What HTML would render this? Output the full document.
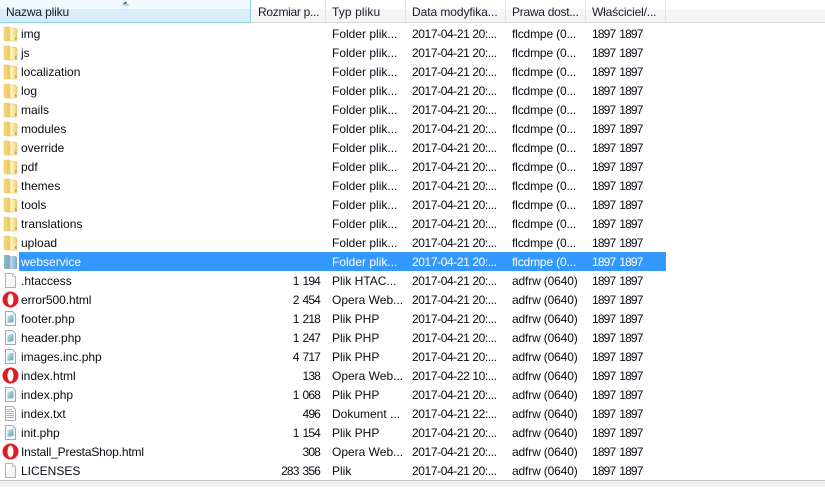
<!DOCTYPE html>
<html lang="pl"><head><meta charset="utf-8"><title>Pliki</title>
<style>
html,body{margin:0;padding:0;background:#fff}
body{width:825px;height:487px;overflow:hidden;position:relative;font:12px/19px "Liberation Sans",sans-serif;color:#0a0a14}
#hd{position:absolute;left:0;top:0;width:825px;height:22px;background:linear-gradient(#fff 0,#fff 9px,#f6f7f9 9px,#f3f4f6 21px);border-bottom:1px solid #d5d5d5;line-height:25px;color:#1a1c28}
#hs{position:absolute;left:0;top:0;width:250px;height:22px;background:linear-gradient(#f1f9fe 0,#f1f9fe 9px,#d9eef9 9px,#d6ecf8 21px);border-bottom:1px solid #8fd2f0}
.sep{position:absolute;top:0;width:1px;height:22px;background:#e3e5e8}
.h{position:absolute;top:0;white-space:nowrap}
.r{position:absolute;left:0;width:666px;height:19px;white-space:nowrap}
.r span{position:absolute;top:1px}
.n{left:21px}
.s{left:250px;width:70px;text-align:right;letter-spacing:-.85px;word-spacing:1.5px}
.t{left:332px}
.d{left:412px;letter-spacing:-.4px}
.p{left:512px;letter-spacing:-.15px}
.o{left:592px;letter-spacing:-.85px;word-spacing:1.5px}
.r svg{position:absolute;left:2px;top:1px}
#sel{position:absolute;left:19px;top:252px;width:645px;height:17px;background:#3399ff;border:1px dotted #c8822a}
.w{color:#fff}
#bot{position:absolute;left:0;top:480px;width:825px;height:6px;background:#f0f0f0;border-top:1px solid #c4c4c4}
</style></head><body>
<svg width="0" height="0" style="position:absolute">
<defs>
<linearGradient id="fy" x1="0" y1="0" x2="1" y2="0"><stop offset="0" stop-color="#f8dc80"/><stop offset=".4" stop-color="#ecc860"/><stop offset=".55" stop-color="#fef6cc"/><stop offset=".75" stop-color="#fae69a"/><stop offset="1" stop-color="#eccb6c"/></linearGradient>
<linearGradient id="fz" x1="0" y1="0" x2="1" y2="0"><stop offset="0" stop-color="#8fb6cc"/><stop offset=".4" stop-color="#7fa9c2"/><stop offset=".55" stop-color="#bcd8ea"/><stop offset=".75" stop-color="#9cc4dc"/><stop offset="1" stop-color="#7aa8c8"/></linearGradient>
<linearGradient id="fb" x1="0" y1="0" x2="1" y2="1"><stop offset="0" stop-color="#c9e6f0"/><stop offset="1" stop-color="#5da3bb"/></linearGradient>
<linearGradient id="fp" x1="0" y1="0" x2="1" y2="1"><stop offset="0" stop-color="#fff"/><stop offset="1" stop-color="#eceef0"/></linearGradient>
<symbol id="folder" viewBox="0 0 17 17"><path d="M2 2h5l1 1h5l2 1v11.500l-.5.500H3l-1-1z" fill="url(#fy)" stroke="#dcc070" stroke-width=".5"/><path d="M13 12.500h1.500v2H13z" fill="#6aa8c4"/></symbol>
<symbol id="folders" viewBox="0 0 17 17"><path d="M2 2h5l1 1h5l2 1v11.500l-.5.500H3l-1-1z" fill="url(#fz)"/></symbol>
<symbol id="file" viewBox="0 0 17 17"><path d="M3.500 1.500h7l3 3v11h-10z" fill="url(#fp)" stroke="#b0b4ba"/><path d="M10.500 1.500v3h3" fill="#f2f3f5" stroke="#c0c4ca"/></symbol>
<symbol id="php" viewBox="0 0 17 17"><path d="M3.500 1.500h7l3 3v11h-10z" fill="#f8f9fa" stroke="#a4a8ae"/><path d="M5.500 6l6-1.500V12l-6 1z" fill="url(#fb)"/></symbol>
<symbol id="txt" viewBox="0 0 17 17"><path d="M3.500 1.500h7l3 3v11h-10z" fill="#fff" stroke="#a9adb3"/><path d="M5 4.500h5M5 6.500h7M5 8.500h7M5 10.500h7M5 12.500h7" stroke="#a9b4c4"/></symbol>
<symbol id="opera" viewBox="0 0 17 17"><ellipse cx="8.500" cy="8.500" rx="8" ry="8" fill="#dc1d24"/><ellipse cx="8.500" cy="8.500" rx="3" ry="6" fill="#fff"/></symbol>
</defs></svg>

<div id="hd">
<div id="hs"></div>
<svg style="position:absolute;left:121px;top:1px" width="9" height="5"><path d="M.5 4.500L4.500 .5l4 4z" fill="#a5d0ea"/><path d="M1.500 3.500L4.500 .5l1.500 1.500z" fill="#35566e"/></svg>
<div class="sep" style="left:250px;background:#8fd2f0"></div>
<div class="sep" style="left:325px"></div><div class="sep" style="left:405px"></div><div class="sep" style="left:505px"></div><div class="sep" style="left:585px"></div><div class="sep" style="left:665px"></div>
<span class="h" style="left:6px;letter-spacing:-.15px">Nazwa pliku</span>
<span class="h" style="left:258px;letter-spacing:-.3px">Rozmiar p...</span>
<span class="h" style="left:332px;letter-spacing:.1px">Typ pliku</span>
<span class="h" style="left:412px;letter-spacing:-.07px">Data modyfika...</span>
<span class="h" style="left:512px;letter-spacing:-.27px">Prawa dost...</span>
<span class="h" style="left:592px;letter-spacing:-.17px">Właściciel/...</span>
</div>

<div id="sel"></div>

<div class="r" style="top:24px"><svg width="17" height="17"><use href="#folder"/></svg><span class="n">img</span><span class="t">Folder plik...</span><span class="d">2017-04-21 20:...</span><span class="p">flcdmpe (0...</span><span class="o">1897 1897</span></div>
<div class="r" style="top:43px"><svg width="17" height="17"><use href="#folder"/></svg><span class="n">js</span><span class="t">Folder plik...</span><span class="d">2017-04-21 20:...</span><span class="p">flcdmpe (0...</span><span class="o">1897 1897</span></div>
<div class="r" style="top:62px"><svg width="17" height="17"><use href="#folder"/></svg><span class="n">localization</span><span class="t">Folder plik...</span><span class="d">2017-04-21 20:...</span><span class="p">flcdmpe (0...</span><span class="o">1897 1897</span></div>
<div class="r" style="top:81px"><svg width="17" height="17"><use href="#folder"/></svg><span class="n">log</span><span class="t">Folder plik...</span><span class="d">2017-04-21 20:...</span><span class="p">flcdmpe (0...</span><span class="o">1897 1897</span></div>
<div class="r" style="top:100px"><svg width="17" height="17"><use href="#folder"/></svg><span class="n">mails</span><span class="t">Folder plik...</span><span class="d">2017-04-21 20:...</span><span class="p">flcdmpe (0...</span><span class="o">1897 1897</span></div>
<div class="r" style="top:119px"><svg width="17" height="17"><use href="#folder"/></svg><span class="n">modules</span><span class="t">Folder plik...</span><span class="d">2017-04-21 20:...</span><span class="p">flcdmpe (0...</span><span class="o">1897 1897</span></div>
<div class="r" style="top:138px"><svg width="17" height="17"><use href="#folder"/></svg><span class="n">override</span><span class="t">Folder plik...</span><span class="d">2017-04-21 20:...</span><span class="p">flcdmpe (0...</span><span class="o">1897 1897</span></div>
<div class="r" style="top:157px"><svg width="17" height="17"><use href="#folder"/></svg><span class="n">pdf</span><span class="t">Folder plik...</span><span class="d">2017-04-21 20:...</span><span class="p">flcdmpe (0...</span><span class="o">1897 1897</span></div>
<div class="r" style="top:176px"><svg width="17" height="17"><use href="#folder"/></svg><span class="n">themes</span><span class="t">Folder plik...</span><span class="d">2017-04-21 20:...</span><span class="p">flcdmpe (0...</span><span class="o">1897 1897</span></div>
<div class="r" style="top:195px"><svg width="17" height="17"><use href="#folder"/></svg><span class="n">tools</span><span class="t">Folder plik...</span><span class="d">2017-04-21 20:...</span><span class="p">flcdmpe (0...</span><span class="o">1897 1897</span></div>
<div class="r" style="top:214px"><svg width="17" height="17"><use href="#folder"/></svg><span class="n">translations</span><span class="t">Folder plik...</span><span class="d">2017-04-21 20:...</span><span class="p">flcdmpe (0...</span><span class="o">1897 1897</span></div>
<div class="r" style="top:233px"><svg width="17" height="17"><use href="#folder"/></svg><span class="n">upload</span><span class="t">Folder plik...</span><span class="d">2017-04-21 20:...</span><span class="p">flcdmpe (0...</span><span class="o">1897 1897</span></div>
<div class="r w" style="top:252px"><svg width="17" height="17"><use href="#folders"/></svg><span class="n">webservice</span><span class="t">Folder plik...</span><span class="d">2017-04-21 20:...</span><span class="p">flcdmpe (0...</span><span class="o">1897 1897</span></div>
<div class="r" style="top:271px"><svg width="17" height="17"><use href="#file"/></svg><span class="n">.htaccess</span><span class="s">1 194</span><span class="t">Plik HTAC...</span><span class="d">2017-04-21 20:...</span><span class="p">adfrw (0640)</span><span class="o">1897 1897</span></div>
<div class="r" style="top:290px"><svg width="17" height="17"><use href="#opera"/></svg><span class="n" style="letter-spacing:-.08px">error500.html</span><span class="s">2 454</span><span class="t">Opera Web...</span><span class="d">2017-04-21 20:...</span><span class="p">adfrw (0640)</span><span class="o">1897 1897</span></div>
<div class="r" style="top:309px"><svg width="17" height="17"><use href="#php"/></svg><span class="n" style="letter-spacing:.05px">footer.php</span><span class="s">1 218</span><span class="t">Plik PHP</span><span class="d">2017-04-21 20:...</span><span class="p">adfrw (0640)</span><span class="o">1897 1897</span></div>
<div class="r" style="top:328px"><svg width="17" height="17"><use href="#php"/></svg><span class="n">header.php</span><span class="s">1 247</span><span class="t">Plik PHP</span><span class="d">2017-04-21 20:...</span><span class="p">adfrw (0640)</span><span class="o">1897 1897</span></div>
<div class="r" style="top:347px"><svg width="17" height="17"><use href="#php"/></svg><span class="n">images.inc.php</span><span class="s">4 717</span><span class="t">Plik PHP</span><span class="d">2017-04-21 20:...</span><span class="p">adfrw (0640)</span><span class="o">1897 1897</span></div>
<div class="r" style="top:366px"><svg width="17" height="17"><use href="#opera"/></svg><span class="n">index.html</span><span class="s">138</span><span class="t">Opera Web...</span><span class="d">2017-04-22 10:...</span><span class="p">adfrw (0640)</span><span class="o">1897 1897</span></div>
<div class="r" style="top:385px"><svg width="17" height="17"><use href="#php"/></svg><span class="n">index.php</span><span class="s">1 068</span><span class="t">Plik PHP</span><span class="d">2017-04-21 20:...</span><span class="p">adfrw (0640)</span><span class="o">1897 1897</span></div>
<div class="r" style="top:404px"><svg width="17" height="17"><use href="#txt"/></svg><span class="n">index.txt</span><span class="s">496</span><span class="t">Dokument ...</span><span class="d">2017-04-21 22:...</span><span class="p">adfrw (0640)</span><span class="o">1897 1897</span></div>
<div class="r" style="top:423px"><svg width="17" height="17"><use href="#php"/></svg><span class="n">init.php</span><span class="s">1 154</span><span class="t">Plik PHP</span><span class="d">2017-04-21 20:...</span><span class="p">adfrw (0640)</span><span class="o">1897 1897</span></div>
<div class="r" style="top:442px"><svg width="17" height="17"><use href="#opera"/></svg><span class="n" style="letter-spacing:-.17px">Install_PrestaShop.html</span><span class="s">308</span><span class="t">Opera Web...</span><span class="d">2017-04-21 20:...</span><span class="p">adfrw (0640)</span><span class="o">1897 1897</span></div>
<div class="r" style="top:461px"><svg width="17" height="17"><use href="#file"/></svg><span class="n">LICENSES</span><span class="s">283 356</span><span class="t">Plik</span><span class="d">2017-04-21 20:...</span><span class="p">adfrw (0640)</span><span class="o">1897 1897</span></div>

<div id="bot"></div>
</body></html>
